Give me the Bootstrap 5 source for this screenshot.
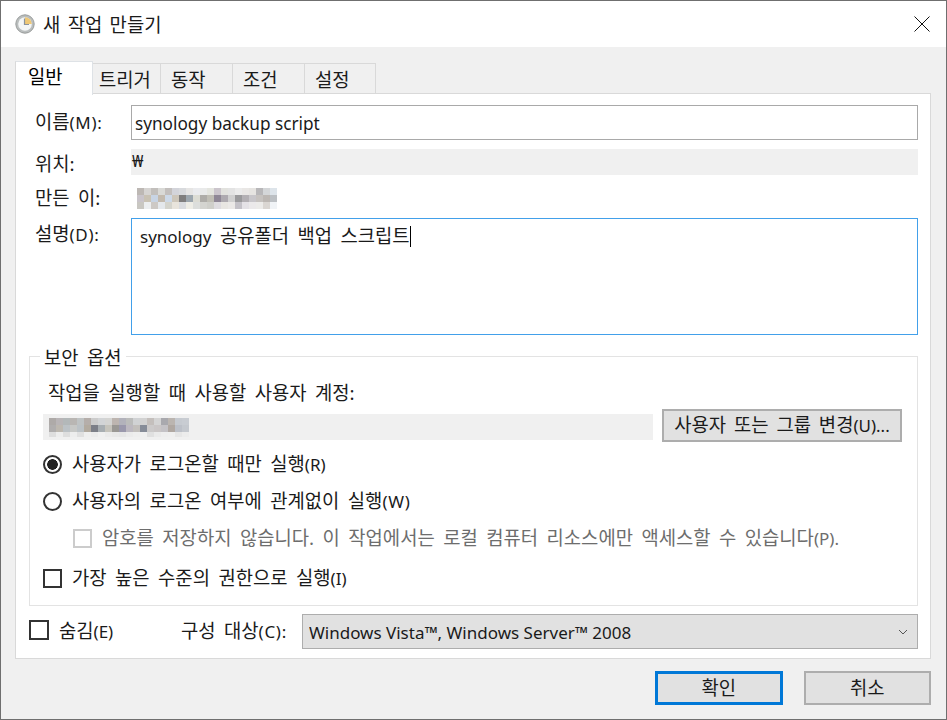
<!DOCTYPE html>
<html lang="ko">
<head>
<meta charset="utf-8">
<title>새 작업 만들기</title>
<link href="https://cdn.jsdelivr.net/npm/bootstrap@5.3.0/dist/css/bootstrap.min.css" rel="stylesheet">
<style>
html,body{margin:0;height:100%;background:#fff}
body{font-family:"Noto Sans","Noto Sans CJK KR",sans-serif;font-size:18.8px;word-spacing:3.6px;color:#1a1a1a;line-height:24px}
.lat{font-size:17px;word-spacing:0}
.lat-w{letter-spacing:.7px}
.dlg{width:947px;height:720px;border:1px solid #6f6f6f;overflow:hidden;background:#f0f0f0}
.dlg-title{height:46px;background:#fff;padding-left:14px;gap:8px}
.dlg-title span{padding-top:2px;word-spacing:2.500px}
.dlg-close{margin-left:auto;margin-right:16px;display:block}
.dlg-body{padding:14px 15px 0 14px}
.tabrow{height:32px;align-items:flex-end;padding:0;border:0;margin:0}
.tabrow .nav-link{height:30px;border:1px solid #d9d9d9;border-bottom:0;border-left:0;border-radius:0;background:#f0f0f0;color:#1a1a1a;padding:0 0 0 10px;margin:0;text-align:left;line-height:33px;font-size:18.8px}
.tabrow .nav-link.active{height:34px;margin-bottom:-2px;width:78px;border-left:1px solid #d9d9d9;background:#fff;position:relative;z-index:2;line-height:31px;padding-left:12px}
.tabrow .nav-link.tw1{width:68px;padding-left:6px}.tw2,.tw3{width:72px}.tw4{width:71px}
.panel{height:566px;background:#fff;border:1px solid #d9d9d9;padding:11px 12px 0 13px}
.lbl{width:102px;padding-left:6px;flex:none;margin:0}
.dlg .field{height:35px;border:1px solid #a9a9a9;border-radius:0;padding:1px 3px 0;font-size:17.2px;word-spacing:0;color:#1a1a1a;box-shadow:none;font-family:inherit;background:#fff}
.row-name{margin-bottom:9px}
.row-loc{height:26px}
.lbl-loc{padding-top:4px}
.ro-strip{height:26px;background:#f0f0f0;flex:1 1 auto;padding-left:1px;line-height:24px;font-size:17px}
.row-owner{height:43px}
.row-owner .lbl{padding-top:2px}
.mos1{margin:4px 0 0 6px}
.lbl-desc{padding-top:4px}
.dlg .memo{height:117px;border:1px solid #42a0ea;border-radius:0;padding:1px 8px 0;flex:1 1 auto;line-height:32px;color:#1a1a1a;background:#fff}
.caret-bar{display:inline-block;width:1px;height:21px;background:#000;vertical-align:-4px}
.secbox{margin:7px 0 0;height:264px;border:1px solid #e3e3e3;padding:0 14px 0 13px}
.secbox legend{float:none;width:auto;font-size:18.8px;line-height:24px;margin:0 0 0 -3px;padding:4px 4px 0}
.sec-label{padding-left:5px;margin:11px 0 4px;height:24px}
.acct{height:26px;width:610px;flex:none;background:#f0f0f0;padding-left:6px;margin-top:3px}
.acct svg,.row-owner svg{display:block}
.btn-win{background:#e1e1e1;border:2px solid #adadad;border-radius:0;color:#1a1a1a;font-size:18.8px;word-spacing:3px;padding:0;line-height:1}
.btn-change{width:240px;height:33px;margin-left:9px}
.opt{min-height:24px;padding:0;margin:0;gap:10px;color:#1a1a1a}
.opt .form-check-input{width:19px;height:19px;margin:0;float:none;flex:none;border:2px solid #333;background:#fff;box-shadow:none;opacity:1}
.opt .form-check-input[type=radio]{border-radius:50%}
.opt .form-check-input[type=checkbox]{border-radius:0}
.opt .form-check-input:checked{background:radial-gradient(circle,#222 0,#222 5px,#fff 5.6px)}
.opt .form-check-input[disabled]~.form-check-label{opacity:1}
.opt1{margin-top:10px}
.opt2{margin-top:12px}
.opt3{margin:12px 0 0 30px}
.opt3 .form-check-input{border-color:#ccc}
.opt3 .form-check-label{color:#6d6d6d}
.opt4{margin-top:15px}
.bottomrow{margin-top:8px;height:35px}
.opt-hide{width:152px;flex:none}
.opt-hide .form-check-input{width:20px;height:20px;margin-bottom:4px}
.target-lbl{width:121px;flex:none;margin:0}
.dlg .target{height:35px;border:1px solid #adadad;border-radius:0;background-color:#e1e1e1;background-image:url("data:image/svg+xml,%3csvg xmlns='http://www.w3.org/2000/svg' viewBox='0 0 10 6'%3e%3cpath fill='none' stroke='%23555' d='M1 1l4 4 4-4'/%3e%3c/svg%3e");background-position:right 9px center;background-size:10px 6px;font-size:17px;word-spacing:0;color:#1a1a1a;padding:2px 30px 0 6px;box-shadow:none;flex:1 1 auto;width:auto;font-family:inherit}
.foot{margin-top:12px;padding-left:640px;gap:21px}
.foot .btn-win{width:128px;height:34px}
.foot .btn-ok{border:3px solid #0078d7}
</style>
</head>
<body>
<div class="dlg d-flex flex-column">
  <div class="dlg-title d-flex align-items-center">
    <svg width="20" height="20" viewBox="0 0 20 20"><circle cx="10" cy="10" r="9.2" fill="#b9bdbd" stroke="#9a9d9c"/><circle cx="10" cy="10" r="6.800" fill="#f4f6f6"/><path d="M10 3.200a6.800 6.800 0 0 1 6.800 6.800h-6.800z" fill="#efc876"/><path d="M9.500 4.500v6h4.500" fill="none" stroke="#8c949c" stroke-width="1.200"/></svg>
    <span>새 작업 만들기</span>
    <svg class="dlg-close" width="16" height="16" viewBox="0 0 16 16"><path d="M.5.500l15 15M15.500.500l-15 15" stroke="#111" stroke-width="1" fill="none"/></svg>
  </div>
  <div class="dlg-body">
    <ul class="nav nav-tabs tabrow">
      <li class="nav-item"><a class="nav-link active" href="#">일반</a></li>
      <li class="nav-item"><a class="nav-link tw1" href="#">트리거</a></li>
      <li class="nav-item"><a class="nav-link tw2" href="#">동작</a></li>
      <li class="nav-item"><a class="nav-link tw3" href="#">조건</a></li>
      <li class="nav-item"><a class="nav-link tw4" href="#">설정</a></li>
    </ul>
    <div class="panel">
      <div class="d-flex align-items-center row-name">
        <label class="lbl" for="nm">이름<span class="lat lat-w">(M):</span></label>
        <input id="nm" class="form-control field" value="synology backup script">
      </div>
      <div class="d-flex align-items-center row-loc">
        <span class="lbl lbl-loc">위치:</span>
        <div class="ro-strip">₩</div>
      </div>
      <div class="d-flex align-items-center row-owner">
        <span class="lbl">만든 이:</span>
        <svg class="mos1" width="140" height="21" viewBox="0 0 20 3" preserveAspectRatio="none" shape-rendering="crispEdges"><rect x="0" y="0" width="1" height="1" fill="#bdb8b4"/><rect x="1" y="0" width="1" height="1" fill="#d6d4d2"/><rect x="2" y="0" width="1" height="1" fill="#c2bfbc"/><rect x="3" y="0" width="1" height="1" fill="#d9d9d6"/><rect x="4" y="0" width="1" height="1" fill="#c3bfbd"/><rect x="5" y="0" width="1" height="1" fill="#d3d4da"/><rect x="6" y="0" width="1" height="1" fill="#d8dadd"/><rect x="7" y="0" width="1" height="1" fill="#e6e5e4"/><rect x="8" y="0" width="1" height="1" fill="#eaebee"/><rect x="9" y="0" width="1" height="1" fill="#e9eaea"/><rect x="10" y="0" width="1" height="1" fill="#e4e5df"/><rect x="11" y="0" width="1" height="1" fill="#cbc5cc"/><rect x="12" y="0" width="1" height="1" fill="#e2e2de"/><rect x="13" y="0" width="1" height="1" fill="#e3e3e3"/><rect x="14" y="0" width="1" height="1" fill="#ebebeb"/><rect x="15" y="0" width="1" height="1" fill="#e9e7e5"/><rect x="16" y="0" width="1" height="1" fill="#e6e4e1"/><rect x="17" y="0" width="1" height="1" fill="#b8b7b9"/><rect x="18" y="0" width="1" height="1" fill="#d4d6d8"/><rect x="19" y="0" width="1" height="1" fill="#dde4ea"/>
        <rect x="0" y="1" width="1" height="1" fill="#c9c4ca"/><rect x="1" y="1" width="1" height="1" fill="#c9c2b4"/><rect x="2" y="1" width="1" height="1" fill="#c8d4e4"/><rect x="3" y="1" width="1" height="1" fill="#c3baae"/><rect x="4" y="1" width="1" height="1" fill="#cdd9e8"/><rect x="5" y="1" width="1" height="1" fill="#cdc6ba"/><rect x="6" y="1" width="1" height="1" fill="#7f7e7e"/><rect x="7" y="1" width="1" height="1" fill="#9ca6ae"/><rect x="8" y="1" width="1" height="1" fill="#dcdcd4"/><rect x="9" y="1" width="1" height="1" fill="#aeaca8"/><rect x="10" y="1" width="1" height="1" fill="#c0beb5"/><rect x="11" y="1" width="1" height="1" fill="#8f8796"/><rect x="12" y="1" width="1" height="1" fill="#aeaab0"/><rect x="13" y="1" width="1" height="1" fill="#d0d0d0"/><rect x="14" y="1" width="1" height="1" fill="#9a9a9c"/><rect x="15" y="1" width="1" height="1" fill="#b3b0b4"/><rect x="16" y="1" width="1" height="1" fill="#c8c6ca"/><rect x="17" y="1" width="1" height="1" fill="#c6c2bf"/><rect x="18" y="1" width="1" height="1" fill="#bcb7b3"/><rect x="19" y="1" width="1" height="1" fill="#bcc0c4"/>
        <rect x="0" y="2" width="1" height="1" fill="#c9c7c2"/><rect x="1" y="2" width="1" height="1" fill="#eceef0"/><rect x="2" y="2" width="1" height="1" fill="#cdc9c5"/><rect x="3" y="2" width="1" height="1" fill="#e4e8ec"/><rect x="4" y="2" width="1" height="1" fill="#d4d4cd"/><rect x="5" y="2" width="1" height="1" fill="#e8e4dc"/><rect x="6" y="2" width="1" height="1" fill="#dadce0"/><rect x="7" y="2" width="1" height="1" fill="#eeede6"/><rect x="8" y="2" width="1" height="1" fill="#dcdedc"/><rect x="9" y="2" width="1" height="1" fill="#d4d4d0"/><rect x="10" y="2" width="1" height="1" fill="#cfcfca"/><rect x="11" y="2" width="1" height="1" fill="#dedce0"/><rect x="12" y="2" width="1" height="1" fill="#e8e6e2"/><rect x="13" y="2" width="1" height="1" fill="#ebe9e7"/><rect x="14" y="2" width="1" height="1" fill="#c4c2c8"/><rect x="15" y="2" width="1" height="1" fill="#e4e2e6"/><rect x="16" y="2" width="1" height="1" fill="#ebe9ea"/><rect x="17" y="2" width="1" height="1" fill="#ecebe9"/><rect x="18" y="2" width="1" height="1" fill="#dad6d2"/><rect x="19" y="2" width="1" height="1" fill="#f0f3f6"/></svg>
      </div>
      <div class="d-flex align-items-start">
        <label class="lbl lbl-desc" for="ds">설명<span class="lat lat-w">(D):</span></label>
        <div id="ds" class="memo"><span class="lat">synology</span> 공유폴더 백업 스크립트<span class="caret-bar"></span></div>
      </div>
      <fieldset class="secbox">
        <legend>보안 옵션</legend>
        <div class="sec-label">작업을 실행할 때 사용할 사용자 계정:</div>
        <div class="d-flex align-items-center">
          <div class="acct d-flex align-items-center">
            <svg width="140" height="19" viewBox="0 0 20 2.714" preserveAspectRatio="none" shape-rendering="crispEdges"><rect x="0" y="0" width="1" height="1" fill="#aeaaa8"/><rect x="1" y="0" width="1" height="1" fill="#b9b5b7"/><rect x="2" y="0" width="1" height="1" fill="#b3b8b9"/><rect x="3" y="0" width="1" height="1" fill="#b9b6b3"/><rect x="4" y="0" width="1" height="1" fill="#bfc3c4"/><rect x="5" y="0" width="1" height="1" fill="#b5aeaa"/><rect x="6" y="0" width="1" height="1" fill="#cccccc"/><rect x="7" y="0" width="1" height="1" fill="#d2d4d6"/><rect x="8" y="0" width="1" height="1" fill="#d4d4d2"/><rect x="9" y="0" width="1" height="1" fill="#bdb5b0"/><rect x="10" y="0" width="1" height="1" fill="#b2b2bb"/><rect x="11" y="0" width="1" height="1" fill="#bbbcbb"/><rect x="12" y="0" width="1" height="1" fill="#d0d2d4"/><rect x="13" y="0" width="1" height="1" fill="#d2d2d2"/><rect x="14" y="0" width="1" height="1" fill="#c4bfbc"/><rect x="15" y="0" width="1" height="1" fill="#d4d4d4"/><rect x="16" y="0" width="1" height="1" fill="#a9a9ae"/><rect x="17" y="0" width="1" height="1" fill="#bbb5b0"/><rect x="18" y="0" width="1" height="1" fill="#c6cad0"/><rect x="19" y="0" width="1" height="1" fill="#c8ccd2"/>
            <rect x="0" y="1" width="1" height="1" fill="#b0aeae"/><rect x="1" y="1" width="1" height="1" fill="#bdb8b0"/><rect x="2" y="1" width="1" height="1" fill="#bcc2c6"/><rect x="3" y="1" width="1" height="1" fill="#c7c8c6"/><rect x="4" y="1" width="1" height="1" fill="#bcc2c6"/><rect x="5" y="1" width="1" height="1" fill="#b3aba0"/><rect x="6" y="1" width="1" height="1" fill="#7c7f88"/><rect x="7" y="1" width="1" height="1" fill="#a8aeb2"/><rect x="8" y="1" width="1" height="1" fill="#c6c4bc"/><rect x="9" y="1" width="1" height="1" fill="#9a9894"/><rect x="10" y="1" width="1" height="1" fill="#9a98ac"/><rect x="11" y="1" width="1" height="1" fill="#bcb8c0"/><rect x="12" y="1" width="1" height="1" fill="#c2bfbc"/><rect x="13" y="1" width="1" height="1" fill="#868c98"/><rect x="14" y="1" width="1" height="1" fill="#cccaca"/><rect x="15" y="1" width="1" height="1" fill="#cac6c6"/><rect x="16" y="1" width="1" height="1" fill="#c4c2c6"/><rect x="17" y="1" width="1" height="1" fill="#b0a8a2"/><rect x="18" y="1" width="1" height="1" fill="#bcc0c8"/><rect x="19" y="1" width="1" height="1" fill="#c4c8ce"/>
            <rect x="0" y="2" width="1" height="1" fill="#dedede"/><rect x="1" y="2" width="1" height="1" fill="#ededed"/><rect x="2" y="2" width="1" height="1" fill="#dedede"/><rect x="3" y="2" width="1" height="1" fill="#ededed"/><rect x="4" y="2" width="1" height="1" fill="#e0e0e0"/><rect x="5" y="2" width="1" height="1" fill="#efefef"/><rect x="6" y="2" width="1" height="1" fill="#ebebeb"/><rect x="7" y="2" width="1" height="1" fill="#f0f0f0"/><rect x="8" y="2" width="1" height="1" fill="#ebebeb"/><rect x="9" y="2" width="1" height="1" fill="#e8e8e8"/><rect x="10" y="2" width="1" height="1" fill="#e6e6e6"/><rect x="11" y="2" width="1" height="1" fill="#ebebeb"/><rect x="12" y="2" width="1" height="1" fill="#eeeeee"/><rect x="13" y="2" width="1" height="1" fill="#f0f0f0"/><rect x="14" y="2" width="1" height="1" fill="#e0e0e0"/><rect x="15" y="2" width="1" height="1" fill="#eaeaea"/><rect x="16" y="2" width="1" height="1" fill="#eeeeee"/><rect x="17" y="2" width="1" height="1" fill="#efefef"/><rect x="18" y="2" width="1" height="1" fill="#e6e6e6"/><rect x="19" y="2" width="1" height="1" fill="#ececec"/></svg>
          </div>
          <button type="button" class="btn btn-win btn-change">사용자 또는 그룹 변경<span class="lat">(U)...</span></button>
        </div>
        <div class="form-check d-flex align-items-center opt opt1">
          <input class="form-check-input" type="radio" name="run" id="r1" checked>
          <label class="form-check-label" for="r1">사용자가 로그온할 때만 실행<span class="lat">(R)</span></label>
        </div>
        <div class="form-check d-flex align-items-center opt opt2">
          <input class="form-check-input" type="radio" name="run" id="r2">
          <label class="form-check-label" for="r2">사용자의 로그온 여부에 관계없이 실행<span class="lat lat-w">(W)</span></label>
        </div>
        <div class="form-check d-flex align-items-center opt opt3">
          <input class="form-check-input" type="checkbox" id="c1" disabled>
          <label class="form-check-label" for="c1">암호를 저장하지 않습니다. 이 작업에서는 로컬 컴퓨터 리소스에만 액세스할 수 있습니다<span class="lat">(P).</span></label>
        </div>
        <div class="form-check d-flex align-items-center opt opt4">
          <input class="form-check-input" type="checkbox" id="c2">
          <label class="form-check-label" for="c2">가장 높은 수준의 권한으로 실행<span class="lat">(I)</span></label>
        </div>
      </fieldset>
      <div class="d-flex align-items-center bottomrow">
        <div class="form-check d-flex align-items-center opt opt-hide">
          <input class="form-check-input" type="checkbox" id="c3">
          <label class="form-check-label" for="c3">숨김<span class="lat">(E)</span></label>
        </div>
        <label class="target-lbl" for="tg">구성 대상<span class="lat lat-w">(C):</span></label>
        <select id="tg" class="form-select target"><option>Windows Vista™, Windows Server™ 2008</option></select>
      </div>
    </div>
    <div class="d-flex foot">
      <button type="button" class="btn btn-win btn-ok">확인</button>
      <button type="button" class="btn btn-win">취소</button>
    </div>
  </div>
</div>
<script src="https://cdn.jsdelivr.net/npm/bootstrap@5.3.0/dist/js/bootstrap.bundle.min.js"></script>
</body>
</html>
